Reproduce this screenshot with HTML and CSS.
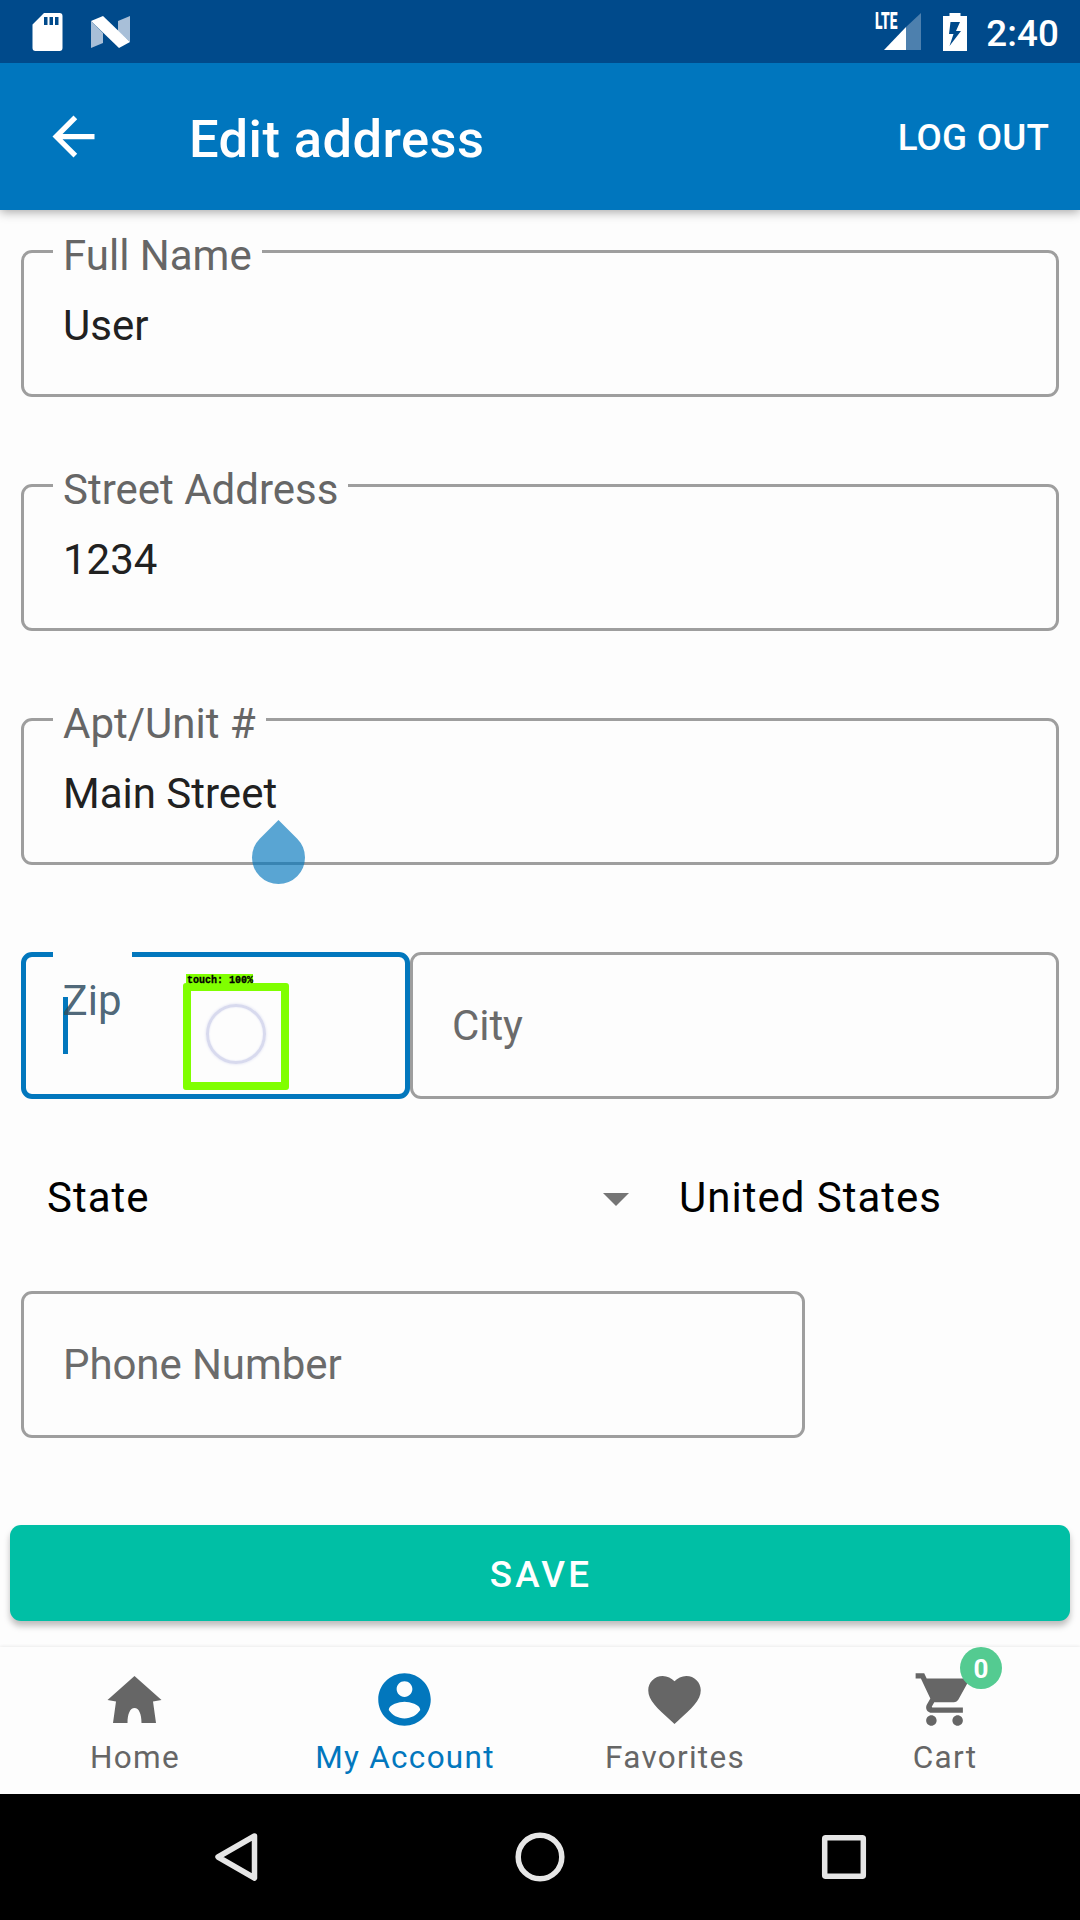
FILE: index.html
```html
<!DOCTYPE html>
<html lang="en">
<head>
<meta charset="utf-8">
<title>Edit address</title>
<link rel="stylesheet" href="styles.css">
</head>
<body>
<div class="screen">
  <header class="status">
    <div class="status-group">
      <svg class="sd" viewBox="0 0 30 38"><path fill="#fff" fill-rule="evenodd" d="M11.500 0H27a3 3 0 0 1 3 3v32a3 3 0 0 1-3 3H3a3 3 0 0 1-3-3V11.500zM11.500 4v8h3.500V4zm5.500 0v8h3.500V4zm5.500 0v8h3.500V4z"/></svg>
      <svg class="nougat" viewBox="0 0 39 32"><path fill="#a8bfd8" d="M0 5l12 12v10L0 32zM27 5l12-5v26L27 15z"/><path fill="#fff" d="M0 5L12 0l27 26-11 6z"/></svg>
    </div>
    <div class="status-group">
      <div class="signal">
        <svg viewBox="0 0 46 38"><path fill="#4d80ae" d="M46 0v37H31V14z"/><path fill="#fff" d="M31 14v23H9z"/></svg>
        <span class="lte">LTE</span>
      </div>
      <svg class="battery" viewBox="0 0 24 38"><path fill="#fff" fill-rule="evenodd" d="M6.500 0h11v3H24v35H0V3h6.500zM7.500 9L6 21h4.500L6.500 33 18 18h-5l4-9z"/></svg>
      <span class="clock">2:40</span>
    </div>
  </header>

  <div class="appbar">
    <svg class="back" viewBox="0 0 24 24"><path fill="#fff" d="M20 11H7.830l5.590-5.590L12 4l-8 8 8 8 1.410-1.410L7.830 13H20v-2z"/></svg>
    <h1 class="title">Edit address</h1>
    <span class="logout">LOG OUT</span>
  </div>

  <main class="form">
    <div class="field filled"><span class="label">Full Name</span><span class="value">User</span></div>
    <div class="field filled"><span class="label">Street Address</span><span class="value">1234</span></div>
    <div class="field filled"><span class="label">Apt/Unit #</span><span class="value">Main Street</span><i class="handle"></i></div>
    <div class="row">
      <div class="field zip">
        <i class="caret"></i>
        <span class="zip-label">Zip</span>
        <div class="touch"><span class="touch-label">touch: 100%</span><i class="touch-ring"></i></div>
      </div>
      <div class="field city"><span class="hint">City</span></div>
    </div>
    <div class="selects">
      <span class="state">State</span>
      <svg class="arrow" viewBox="0 0 26 13"><path fill="#757575" d="M0 0h26L13 13z"/></svg>
      <span class="country">United States</span>
    </div>
    <div class="field phone"><span class="hint">Phone Number</span></div>
    <div class="save">SAVE</div>
  </main>

  <nav class="tabs">
    <div class="tab">
      <svg viewBox="0 0 63 63"><path fill="#666" d="M31.500 8L58.500 32l-8.500 1.500L53 55H38.500c0-9-2.500-15-7-15s-7 6-7 15H10l3-21.500L4.500 32z"/></svg>
      <span>Home</span>
    </div>
    <div class="tab active">
      <svg viewBox="0 0 24 24"><path fill="#0277bd" d="M12 2C6.480 2 2 6.480 2 12s4.480 10 10 10 10-4.480 10-10S17.520 2 12 2zm0 3c1.660 0 3 1.340 3 3s-1.340 3-3 3-3-1.340-3-3 1.340-3 3-3zm0 14.200c-2.500 0-4.710-1.280-6-3.220.030-1.990 4-3.080 6-3.080 1.990 0 5.970 1.090 6 3.080-1.290 1.940-3.500 3.220-6 3.220z"/></svg>
      <span>My Account</span>
    </div>
    <div class="tab">
      <svg viewBox="0 0 24 24"><path fill="#666" d="M12 21.350l-1.450-1.320C5.400 15.360 2 12.280 2 8.500 2 5.420 4.420 3 7.500 3c1.740 0 3.410.810 4.500 2.090C13.090 3.810 14.760 3 16.500 3 19.580 3 22 5.420 22 8.500c0 3.780-3.400 6.860-8.550 11.540L12 21.350z"/></svg>
      <span>Favorites</span>
    </div>
    <div class="tab">
      <svg viewBox="0 0 24 24"><path fill="#666" d="M7 18c-1.100 0-1.990.900-1.990 2S5.900 22 7 22s2-.900 2-2-.900-2-2-2zM1 2v2h2l3.600 7.590-1.350 2.450c-.160.280-.250.610-.250.960 0 1.100.900 2 2 2h12v-2H7.420c-.140 0-.250-.110-.250-.250l.030-.120.900-1.630h7.450c.750 0 1.410-.410 1.750-1.030l3.580-6.490c.080-.140.120-.310.120-.480 0-.550-.450-1-1-1H5.210l-.940-2H1zm16 16c-1.100 0-1.990.900-1.990 2s.890 2 1.990 2 2-.900 2-2-.900-2-2-2z"/></svg>
      <span>Cart</span>
      <b class="badge">0</b>
    </div>
  </nav>

  <footer class="sysnav">
    <svg viewBox="0 0 50 50"><path d="M43.500 4L7 25l36.500 21z"/></svg>
    <svg viewBox="0 0 50 50"><circle cx="25" cy="25" r="21.800"/></svg>
    <svg viewBox="0 0 50 50"><rect x="5.700" y="5.700" width="38.600" height="38.600" rx="1"/></svg>
  </footer>
</div>
</body>
</html>
```
FILE: styles.css
```css
* { box-sizing: border-box; }
body { margin: 0; font-family: Roboto, "Liberation Sans", sans-serif; }
svg { display: block; flex: none; }
.screen {
  width: 1080px; height: 1920px; overflow: hidden;
  display: flex; flex-direction: column; background: #fdfdfd;
}

/* Status bar */
.status {
  position: relative; z-index: 1;
  height: 63px; flex: none; background: #004a8b; color: #fff;
  display: flex; justify-content: space-between; padding: 0 21px 0 32px;
}
.status-group { display: flex; align-items: center; }
.sd { width: 31px; height: 38px; margin-right: 28px; }
.nougat { width: 39px; height: 32px; }
.signal { position: relative; width: 46px; height: 38px; margin-right: 22px; }
.signal svg { width: 46px; height: 38px; }
.lte {
  position: absolute; left: 0; top: 0; font-size: 23px; line-height: 17px;
  font-weight: 900; transform: scaleX(.6); transform-origin: 0 0;
}
.battery { width: 24px; height: 38px; margin-right: 19px; }
.clock { font-size: 36.750px; font-weight: 500; line-height: 40px; padding-top: 4px; letter-spacing: .1px; }

/* App bar */
.appbar {
  height: 147px; flex: none; background: #0076be; color: #fff; position: relative;
  display: flex; align-items: center; padding: 0 31px 0 42px;
  box-shadow: 0 2px 10px rgba(0, 0, 0, .35);
}
.back { width: 63px; height: 63px; }
.title { margin: 4px 0 0 84px; font-size: 52.500px; line-height: 60px; font-weight: 500; letter-spacing: .42px; flex: 1; }
.logout { font-size: 36.750px; line-height: 42px; font-weight: 500; letter-spacing: .2px; padding-top: 2px; }

/* Form */
.form {
  height: 1437px; flex: none; padding: 40px 21px 0;
  display: flex; flex-direction: column; font-size: 42px; line-height: 42px;
}
.field {
  position: relative; height: 147px; flex: none; margin-bottom: 87px; padding: 0 39px;
  border: 3px solid #9e9e9e; border-radius: 11px; display: flex; align-items: center;
}
.label {
  position: absolute; left: 29px; top: -18px; padding: 0 10px;
  background: #fdfdfd; color: #666; white-space: nowrap;
}
.value { color: #212121; padding-top: 5px; }
.hint { color: #6b6b6b; padding-top: 1px; letter-spacing: -.08px; }
.handle {
  position: absolute; left: 227.500px; top: 109.500px; width: 53px; height: 53px;
  background: rgba(2, 119, 189, .65); border-radius: 0 50% 50% 50%; transform: rotate(45deg);
}
.row { display: flex; height: 147px; flex: none; }
.zip { width: 389px; border: 5px solid #0277bd; }
.zip::before {
  content: ""; position: absolute; left: 27px; top: -5px; width: 79px; height: 5px; background: #fdfdfd;
}
.zip-label { position: absolute; left: 36.500px; top: 23px; color: rgba(50, 78, 98, .87); }
.caret { position: absolute; left: 37px; top: 40px; width: 5px; height: 57px; background: #0277bd; }
.touch {
  position: absolute; left: 157px; top: 26px; width: 106px; height: 107px;
  border: 8px solid #80ff00; border-radius: 3px;
}
.touch-label {
  position: absolute; left: -5px; top: -17px; width: 67px; height: 10px; background: #80ff00; color: #000;
  font: 700 10px/13px "Liberation Mono", monospace; padding-left: 1px; white-space: nowrap;
  -webkit-text-stroke: .3px #000;
}
.touch-ring {
  position: absolute; left: 15px; top: 13px; width: 60px; height: 60px;
  border: 3px solid #d8daee; border-radius: 50%; box-shadow: 0 0 3px #dcdef2, inset 0 0 2px #e4e6f6;
}
.city { flex: 1; padding-left: 39px; }
.selects {
  display: flex; align-items: center; height: 72px; flex: none;
  margin: 63px 0 57px; padding-left: 26px; color: #000; letter-spacing: 1px;
}
.state { width: 556px; }
.arrow { width: 26px; height: 13px; margin: 2px 50px 0 0; }
.phone { width: 784px; }
.save {
  height: 96px; flex: none; margin: 0 -11px; border-radius: 11px; background: #00bfa5; color: #fff;
  display: flex; align-items: center; justify-content: center; padding: 3px 0 0 2px;
  font-size: 36.750px; font-weight: 500; letter-spacing: 3.280px; box-shadow: 0 5px 6px rgba(0, 0, 0, .25);
}

/* Bottom tabs */
.tabs {
  height: 147px; flex: none; display: grid; grid-template-columns: repeat(4, 1fr);
  background: #fdfdfd; box-shadow: 0 -1px 3px rgba(0, 0, 0, .07);
}
.tab {
  position: relative; display: flex; flex-direction: column; align-items: center;
  padding-top: 21px; color: #666; font-size: 31.500px; line-height: 36px; letter-spacing: 1.280px;
}
.tab svg { width: 63px; height: 63px; margin: 0 1px 9px 0; }
.active { color: #0277bd; }
.badge {
  position: absolute; left: 150px; top: 0; width: 42px; height: 42px; border-radius: 50%;
  background: #54cb91; color: #fff; font-size: 26px; font-weight: 700; line-height: 44px;
  text-align: center; letter-spacing: 0;
}

/* System navigation */
.sysnav { height: 126px; flex: none; background: #000; display: flex; align-items: center; justify-content: center; gap: 254px; }
.sysnav svg { width: 50px; height: 50px; fill: none; stroke: #e6e6e6; stroke-width: 5.500; stroke-linejoin: round; }
```
